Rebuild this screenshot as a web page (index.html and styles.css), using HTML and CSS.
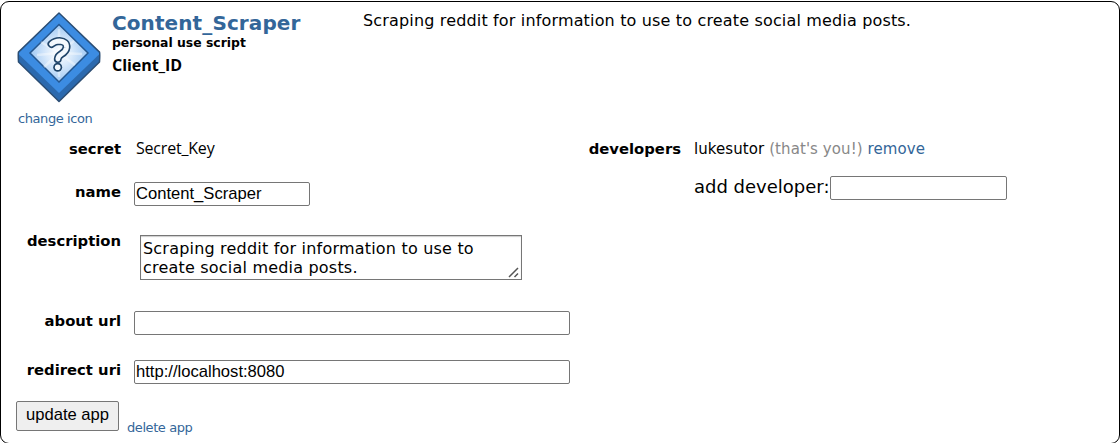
FILE: index.html
```html
<!DOCTYPE html>
<html lang="en">
<head>
<meta charset="utf-8">
<title>Content_Scraper</title>
<link rel="stylesheet" href="styles.css">
</head>
<body>
<main class="app">
  <header class="head">
    <div class="icon-col">
      <svg class="icon" width="86" height="92" viewBox="0 0 86 92">
        <defs>
          <radialGradient id="glow"><stop offset="0" stop-color="#fff"/><stop offset=".45" stop-color="#d8e9fb"/><stop offset="1" stop-color="#a0c8f3"/></radialGradient>
        </defs>
        <path d="M43 2 83.500 41Q84 43 83.500 51L43 90.500 2.500 51Q2 43 2.500 41Z" fill="#2b69ae" stroke="#2b4d73" stroke-width="1.500" stroke-linejoin="round"/>
        <path d="M43 3 83 42V43.500L43 82 3 43.500V42Z" fill="#3c8ce2"/>
        <path d="M43 13.500 72 42 43 71 14 42Z" fill="url(#glow)" stroke="#24568e" stroke-width="1.500"/>
        <path d="M43 42 25 31M43 42 21 44M43 42 28 56M43 42 43 66M43 42 59 54M43 42 66 43M43 42 58 30M43 42 43 18" stroke="#fff" stroke-width="2.500" opacity=".4"/>
        <path d="M35.500 33Q39 30 43.500 30Q51 30.500 50.500 36.500Q50 40.500 45.500 43Q42 45 41.800 48" fill="none" stroke="#1f4469" stroke-width="8" stroke-linecap="round"/>
        <circle cx="41.700" cy="56.300" r="4.500" fill="#1f4469"/>
        <path d="M35.500 33Q39 30 43.500 30Q51 30.500 50.500 36.500Q50 40.500 45.500 43Q42 45 41.800 48" fill="none" stroke="#f3f8fd" stroke-width="4.800" stroke-linecap="round"/>
        <circle cx="41.700" cy="56.300" r="2.800" fill="#f3f8fd"/>
      </svg>
      <a class="link small">change icon</a>
    </div>
    <div class="titles">
      <h1 class="title">Content_Scraper</h1>
      <div class="kind">personal use script</div>
      <div class="client">Client_ID</div>
    </div>
    <p class="summary">Scraping reddit for information to use to create social media posts.</p>
  </header>
  <div class="details">
    <div class="fields">
      <div class="row secret-row"><span class="label">secret</span><span class="secret">Secret_Key</span></div>
      <div class="row name-row"><label class="label">name</label><input class="input short" value="Content_Scraper"></div>
      <div class="row desc-row"><label class="label">description</label><div class="area-box"><textarea class="area">Scraping reddit for information to use to create social media posts.</textarea><svg class="grip" width="12" height="11" viewBox="0 0 12 11"><path d="M1 10 10 1M6.500 10 10 6.500" stroke="#555" stroke-width="1.500"/></svg></div></div>
      <div class="row about-row"><label class="label">about url</label><input class="input"></div>
      <div class="row redirect-row"><label class="label">redirect uri</label><input class="input" value="http://localhost:8080"></div>
    </div>
    <div class="devs">
      <span class="label">developers</span>
      <div>
        <div class="dev">lukesutor <span class="you">(that's you!)</span> <a class="link">remove</a></div>
        <div class="add"><label class="add-label">add developer:</label><input class="input short"></div>
      </div>
    </div>
  </div>
  <div class="actions"><button class="update">update app</button><a class="link small delete">delete app</a></div>
</main>
</body>
</html>
```
FILE: styles.css
```css
* { box-sizing: border-box; }
body { margin: 0; height: 443px; padding-top: 1px; overflow: hidden; background: #fff; color: #000; font-family: Verdana, "DejaVu Sans", sans-serif; }
.app { height: 443px; border: 1px solid #000; border-radius: 9px; padding: 8px 0 0 15px; }
.head { display: flex; height: 126px; }
.icon-col { width: 96px; padding: 1px 0 0 1px; }
.icon { display: block; margin-left: -1px; }
.link { color: #369; }
.small { font-size: 13px; letter-spacing: -0.42px; }
.icon-col .small { display: block; line-height: 16px; margin: 8px 0 0 1px; white-space: nowrap; }
.titles { width: 251px; }
.title { margin: 0; font-size: 20px; line-height: 26px; letter-spacing: 0.1px; color: #369; }
.kind { font-size: 12.4px; font-weight: bold; line-height: 14px; }
.client { font-family: "Open Sans", sans-serif; font-weight: bold; font-size: 16px; line-height: 22px; margin-top: 4px; letter-spacing: -0.05px; }
.summary { margin: 0; padding-top: 1px; font-size: 16px; line-height: 20px; letter-spacing: 0.16px; white-space: nowrap; }
.details { display: flex; height: 265px; }
.fields { width: 571px; }
.row { display: flex; }
.label { width: 105px; margin-right: 13px; flex: none; text-align: right; font-weight: bold; font-size: 14.8px; line-height: 20px; }
.secret-row { height: 46px; padding-top: 3px; }
.secret { font-family: "Open Sans", sans-serif; font-size: 16px; line-height: 18px; padding-left: 2px; letter-spacing: -0.2px; }
.name-row { height: 53px; }
.desc-row { height: 76px; }
.about-row { height: 49px; }
.input { width: 436px; height: 24px; border: 1px solid #767676; border-radius: 2px; padding: 0 1px; font: 16.6px/20px "Liberation Sans", Arial, sans-serif; background: #fff; color: #000; }
.input.short { width: 176px; }
.area-box { position: relative; width: 382px; height: 45px; margin-left: 6px; }
.area { display: block; width: 100%; height: 100%; padding: 3px 2px; border: 1px solid #767676; border-radius: 0; font: 16px/19px Verdana, "DejaVu Sans", sans-serif; letter-spacing: 0.2px; box-shadow: inset 0 1px 1px #ccc; overflow: hidden; resize: none; color: #000; }
.grip { position: absolute; right: 2px; bottom: 2px; }
.desc-row .label { margin-top: -4px; }
.devs { display: flex; padding-top: 3px; }
.devs .label { width: 94px; }
.dev { font-size: 15px; line-height: 20px; letter-spacing: 0.08px; white-space: nowrap; }
.you { color: #888; }
.add { display: flex; margin-top: 17px; }
.add-label { font-size: 18px; line-height: 22px; white-space: nowrap; }
.add .input.short { width: 177px; }
.actions { display: flex; }
.update { width: 103px; height: 30px; padding: 0 0 3px; border: 1px solid #767676; border-radius: 2px; background: #efefef; color: #000; font: 16.6px/20px "Liberation Sans", Arial, sans-serif; }
.delete { margin: 19px 0 0 8px; line-height: 16px; }
```
